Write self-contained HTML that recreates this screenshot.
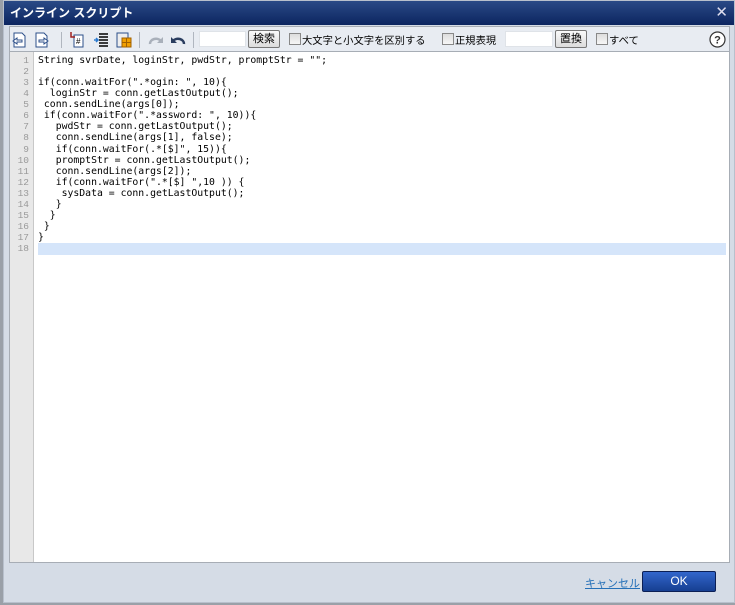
<!DOCTYPE html>
<html><head><meta charset="utf-8"><style>
*{margin:0;padding:0;box-sizing:border-box}
body{width:735px;height:605px;background:#9aa0a8;position:relative;overflow:hidden;font-family:"Liberation Sans","Noto Sans CJK JP",sans-serif;font-size:11px}
#dlg{position:absolute;left:3px;top:0;width:732px;height:603px;background:#d5dce6;border:1px solid #b8c0cc}
#title{position:absolute;left:0;top:0;width:100%;height:24px;background:linear-gradient(#2a4a86,#0c2560);color:#fff;font-weight:bold;font-size:12px;line-height:24px;padding-left:6px}
#close{position:absolute;right:6px;top:0;color:#dde;font-size:15px;font-weight:normal}
#tb{position:absolute;left:5px;top:25px;width:721px;height:26px;background:#e8ecf2;border:1px solid #a7adb5;border-bottom:none}
.ic{position:absolute;top:5px;width:16px;height:16px}
.sep{position:absolute;top:5px;width:1px;height:16px;background:#b0b6bf}
.inp{position:absolute;top:4px;height:16px;background:#fff;border:1px solid #dfe3e8}
.btn{position:absolute;top:3px;height:18px;border:1px solid #777;border-radius:2px;background:linear-gradient(#fafafa,#dcdcdc);font-size:11px;line-height:16px;text-align:center}
.cb{position:absolute;top:6px;width:12px;height:12px;border:1px solid #888;background:linear-gradient(#ddd,#f6f6f6)}
.lbl{position:absolute;top:5px;font-size:10.3px;color:#000}
#ed{position:absolute;left:5px;top:50px;width:721px;height:512px;background:#fff;border:1px solid #a7adb5}
#gut{position:absolute;left:0;top:0;width:24px;height:100%;background:#e8e8e8;border-right:1px solid #c8c8c8}
.ln{position:absolute;left:0;width:19px;text-align:right;color:#999;font-family:"Liberation Mono",monospace;font-size:9.5px}
pre{position:absolute;left:28px;top:3px;font-family:"DejaVu Sans Mono","Liberation Mono",monospace;font-size:9.8px;line-height:11.06px;color:#000}
#hl{position:absolute;left:28px;top:191px;width:688px;height:12px;background:#d5e5fa}
#cancel{position:absolute;left:581px;top:574px;color:#2570b8;text-decoration:underline;font-size:11px}
#ok{position:absolute;left:638px;top:570px;width:74px;height:21px;border:1px solid #0b1f55;border-radius:2px;background:linear-gradient(#3366cc,#163f91);color:#fff;font-size:12px;text-align:center;line-height:19px}
</style></head><body>
<div id="dlg">
<div id="title">インライン スクリプト<span id="close">✕</span></div>
<div id="tb">
<svg class="ic" style="left:1px" viewBox="0 0 16 16"><path d="M3 1h8l3 3v11H3z" fill="#fff" stroke="#2c4f8a"/><path d="M2 9l4-3v2h5v2H6v2z" fill="#fff" stroke="#2c4f8a"/></svg>
<svg class="ic" style="left:24px" viewBox="0 0 16 16"><path d="M2 1h8l3 3v11H2z" fill="#fff" stroke="#2c4f8a"/><path d="M14 9l-4-3v2H5v2h5v2z" fill="#fff" stroke="#2c4f8a"/></svg>
<div class="sep" style="left:51px"></div>
<svg class="ic" style="left:59px" viewBox="0 0 16 16"><path d="M5 3h9v12H5z" fill="#fff" stroke="#2c4f8a"/><path d="M2 0v5h4" fill="none" stroke="#a02020" stroke-width="1.5"/><text x="7" y="12" font-size="8" fill="#000">#</text></svg>
<svg class="ic" style="left:83px" viewBox="0 0 16 16"><path d="M6 2h9M6 5h9M6 8h9M6 11h9M6 14h9" stroke="#000" stroke-width="1.5"/><path d="M1 8h4M3 6l2 2-2 2" stroke="#2a7ad0" stroke-width="1.5" fill="none"/></svg>
<svg class="ic" style="left:106px" viewBox="0 0 16 16"><path d="M1 1h11v14H1z" fill="#eee" stroke="#2c4f8a"/><rect x="6" y="6" width="9" height="9" fill="#f2a000" stroke="#a06000"/><path d="M10.5 6v9M6 10.5h9" stroke="#a06000"/></svg>
<div class="sep" style="left:129px"></div>
<svg class="ic" style="left:138px" viewBox="0 0 16 16"><path d="M2 12a6 5 0 0 1 11-3" fill="none" stroke="#a9b0ba" stroke-width="2.5"/><path d="M15 5v6h-6z" fill="#a9b0ba"/></svg>
<svg class="ic" style="left:160px" viewBox="0 0 16 16"><path d="M14 12a6 5 0 0 0-11-3" fill="none" stroke="#2a3d5f" stroke-width="2.5"/><path d="M1 5v6h6z" fill="#2a3d5f"/></svg>
<div class="sep" style="left:183px"></div>
<div class="inp" style="left:189px;width:47px"></div>
<div class="btn" style="left:238px;width:32px">検索</div>
<div class="cb" style="left:279px"></div><div class="lbl" style="left:292px">大文字と小文字を区別する</div>
<div class="cb" style="left:432px"></div><div class="lbl" style="left:445px">正規表現</div>
<div class="inp" style="left:495px;width:48px"></div>
<div class="btn" style="left:545px;width:32px">置換</div>
<div class="cb" style="left:586px"></div><div class="lbl" style="left:599px">すべて</div>
<svg class="ic" style="left:699px;top:4px;width:17px;height:17px" viewBox="0 0 17 17"><circle cx="8.5" cy="8.5" r="7.5" fill="#fff" stroke="#333" stroke-width="1.2"/><text x="8.5" y="12.5" font-size="11" font-weight="bold" text-anchor="middle" fill="#333" font-family="Liberation Sans">?</text></svg>
</div>
<div id="ed">
<div id="gut"></div>
<div id="hl"></div>
<div class="ln" style="top:3px;line-height:11.06px;white-space:pre">1
2
3
4
5
6
7
8
9
10
11
12
13
14
15
16
17
18</div>
<pre>String svrDate, loginStr, pwdStr, promptStr = "";

if(conn.waitFor(".*ogin: ", 10){
  loginStr = conn.getLastOutput();
 conn.sendLine(args[0]);
 if(conn.waitFor(".*assword: ", 10)){
   pwdStr = conn.getLastOutput();
   conn.sendLine(args[1], false);
   if(conn.waitFor(.*[$]", 15)){
   promptStr = conn.getLastOutput();
   conn.sendLine(args[2]);
   if(conn.waitFor(".*[$] ",10 )) {
    sysData = conn.getLastOutput();
   }
  }
 }
}</pre>
</div>
<div id="cancel">キャンセル</div>
<div id="ok">OK</div>
</div>
</body></html>
